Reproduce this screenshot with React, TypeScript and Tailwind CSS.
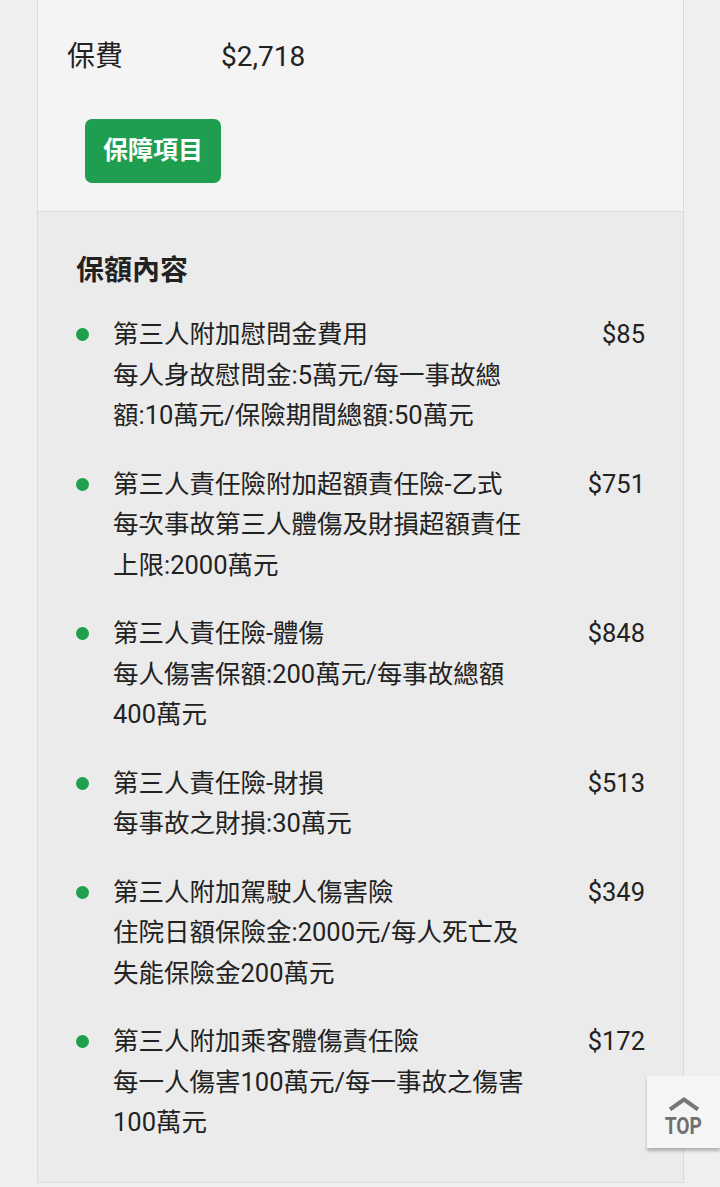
import React from 'react';

interface Coverage {
  title: string;
  price: string;
  lines: string[];
}

const items: Coverage[] = [
  { title: '第三人附加慰問金費用', price: '$85', lines: ['每人身故慰問金:5萬元/每一事故總', '額:10萬元/保險期間總額:50萬元'] },
  { title: '第三人責任險附加超額責任險-乙式', price: '$751', lines: ['每次事故第三人體傷及財損超額責任', '上限:2000萬元'] },
  { title: '第三人責任險-體傷', price: '$848', lines: ['每人傷害保額:200萬元/每事故總額', '400萬元'] },
  { title: '第三人責任險-財損', price: '$513', lines: ['每事故之財損:30萬元'] },
  { title: '第三人附加駕駛人傷害險', price: '$349', lines: ['住院日額保險金:2000元/每人死亡及', '失能保險金200萬元'] },
  { title: '第三人附加乘客體傷責任險', price: '$172', lines: ['每一人傷害100萬元/每一事故之傷害', '100萬元'] },
];

const CoverageRow: React.FC<{ item: Coverage }> = ({ item }) => (
  <div className="flex items-start">
    <div className="w-[13px] h-[13px] rounded-full bg-[#1fa04e] mt-[14px] shrink-0" />
    <div className="ml-[24px] flex-1 text-[25.5px] leading-[40.5px] text-[#222]">
      <div className="whitespace-nowrap">{item.title}</div>
      {item.lines.map((l, i) => (
        <div key={i} className="whitespace-nowrap">{l}</div>
      ))}
    </div>
    <div className="text-[25.5px] leading-[40.5px] text-[#222] text-right">{item.price}</div>
  </div>
);

export default function App() {
  return (
    <div
      className="relative h-[1187px] overflow-hidden bg-[#efefef]"
      style={{ fontFamily: "Roboto, 'Noto Sans CJK TC', sans-serif" }}
    >
      <div className="ml-[37px] w-[647px] border-x border-b border-[#dadada] bg-[#f4f4f4]">
        <div className="pt-[37px] pl-[29px] pb-[28px]">
          <div className="flex text-[28px] leading-[40px] text-[#222]">
            <span className="w-[154px]">保費</span>
            <span>$2,718</span>
          </div>
          <button className="mt-[42px] ml-[18px] w-[136px] h-[64px] rounded-[7px] bg-[#1f9e50] text-white font-bold text-[25px]">
            保障項目
          </button>
        </div>
        <div className="border-t border-[#dadada] bg-[#ebebeb] pt-[39px] px-[38px] pb-[39px]">
          <h3 className="text-[28px] leading-[40px] font-bold text-[#222]">保額內容</h3>
          <div className="mt-[23px] flex flex-col gap-[28px]">
            {items.map((it, i) => (
              <CoverageRow key={i} item={it} />
            ))}
          </div>
        </div>
      </div>

      <button className="absolute right-0 bottom-[39px] w-[73px] h-[72px] bg-[#f5f5f5] shadow-[0_3px_3px_rgba(0,0,0,0.25)] flex flex-col items-center pt-[21px]">
        <svg width="34" height="14" viewBox="0 0 34 14">
          <path d="M3 12.5 L17 2.5 L31 12.5" fill="none" stroke="#777" strokeWidth="4" />
        </svg>
        <span className="mt-[5px] text-[24px] leading-[20px] font-bold text-[#707070] scale-x-80">TOP</span>
      </button>
    </div>
  );
}
